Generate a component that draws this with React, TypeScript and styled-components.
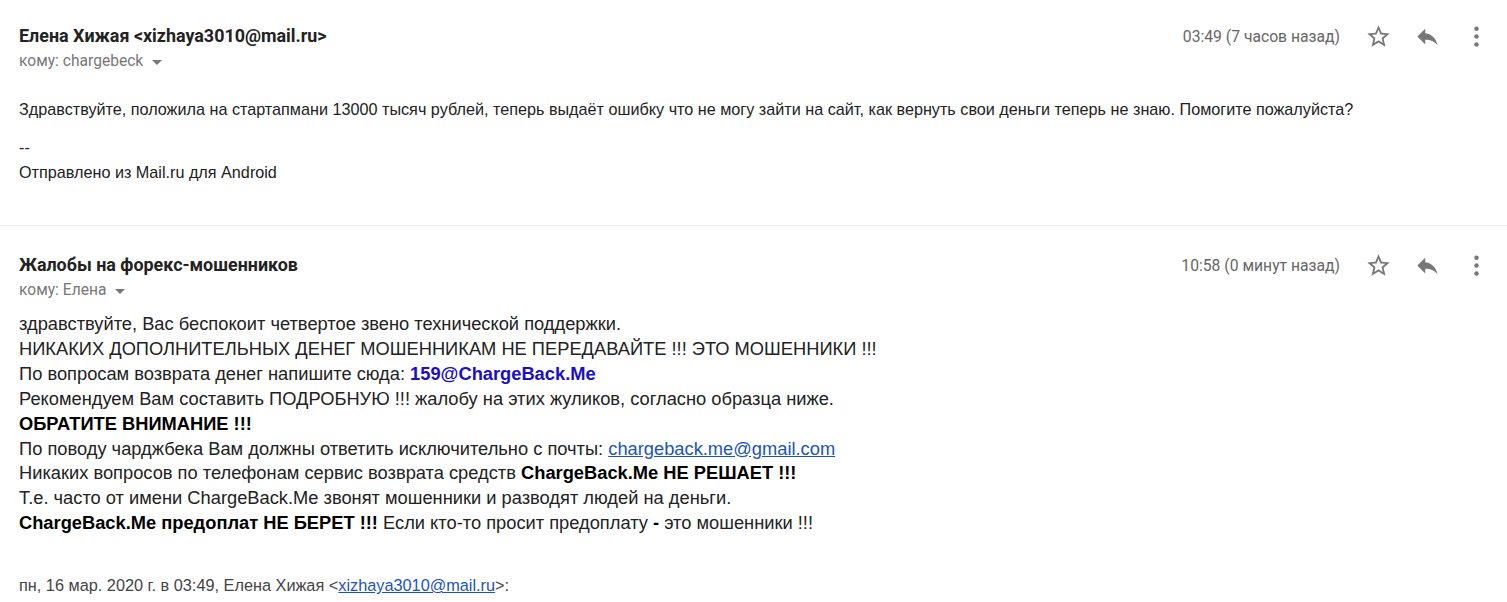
import styled, { createGlobalStyle } from "styled-components";

const GlobalStyle = createGlobalStyle`
  body {
    margin: 0;
    background: #fff;
    font-family: Roboto, "Liberation Sans", Arial, sans-serif;
  }
`;

function StarIcon() {
  return (
    <svg width="27" height="27" viewBox="0 0 24 24">
      <path
        fill="#777"
        d="M22 9.24l-7.19-.62L12 2 9.19 8.63 2 9.24l5.46 4.73L5.82 21 12 17.27 18.18 21l-1.63-7.03L22 9.24zM12 15.4l-3.76 2.27 1-4.28-3.32-2.88 4.38-.38L12 6.1l1.71 4.04 4.38.38-3.32 2.88 1 4.28L12 15.4z"
      />
    </svg>
  );
}

function ReplyIcon() {
  return (
    <svg width="27" height="27" viewBox="0 0 24 24">
      <path fill="#777" d="M10 9V5l-7 7 7 7v-4.1c5 0 8.5 1.6 11 5.1-1-5-4-10-11-11z" />
    </svg>
  );
}

function MoreIcon() {
  return (
    <svg width="27" height="27" viewBox="0 0 24 24">
      <circle cx="12" cy="5" r="2" fill="#777" />
      <circle cx="12" cy="12" r="2" fill="#777" />
      <circle cx="12" cy="19" r="2" fill="#777" />
    </svg>
  );
}

interface HeaderProps {
  from: string;
  to: string;
  time: string;
}

function MessageHeader({ from, to, time }: HeaderProps) {
  return (
    <Header>
      <Sender>
        <From>{from}</From>
        <To>
          кому: {to}
          <Caret />
        </To>
      </Sender>
      <Meta>
        <Time>{time}</Time>
        <IconButton>
          <StarIcon />
        </IconButton>
        <IconButton>
          <ReplyIcon />
        </IconButton>
        <IconButton>
          <MoreIcon />
        </IconButton>
      </Meta>
    </Header>
  );
}

function App() {
  return (
    <>
      <GlobalStyle />
      <Page>
        <Message $top={22} $divider>
          <MessageHeader
            from="Елена Хижая <xizhaya3010@mail.ru>"
            to="chargebeck"
            time="03:49 (7 часов назад)"
          />
          <FirstBody>
            <Para>
              Здравствуйте, положила на стартапмани 13000 тысяч рублей, теперь
              выдаёт ошибку что не могу зайти на сайт, как вернуть свои деньги
              теперь не знаю. Помогите пожалуйста?
            </Para>
            <Line $size={16.2}>--</Line>
            <Line $size={16.2}>Отправлено из Mail.ru для Android</Line>
          </FirstBody>
        </Message>
        <Message $top={25}>
          <MessageHeader
            from="Жалобы на форекс-мошенников"
            to="Елена"
            time="10:58 (0 минут назад)"
          />
          <Body>
            <Line>здравствуйте, Вас беспокоит четвертое звено технической поддержки.</Line>
            <Line>НИКАКИХ ДОПОЛНИТЕЛЬНЫХ ДЕНЕГ МОШЕННИКАМ НЕ ПЕРЕДАВАЙТЕ !!! ЭТО МОШЕННИКИ !!!</Line>
            <Line>
              По вопросам возврата денег напишите сюда: <BlueBold>159@ChargeBack.Me</BlueBold>
            </Line>
            <Line>
              Рекомендуем Вам составить ПОДРОБНУЮ !!! жалобу на этих жуликов, согласно образца ниже.
            </Line>
            <Line>
              <b>ОБРАТИТЕ ВНИМАНИЕ !!!</b>
            </Line>
            <Line>
              По поводу чарджбека Вам должны ответить исключительно с почты:{" "}
              <MailLink>chargeback.me@gmail.com</MailLink>
            </Line>
            <Line>
              Никаких вопросов по телефонам сервис возврата средств{" "}
              <b>ChargeBack.Me НЕ РЕШАЕТ !!!</b>
            </Line>
            <Line>Т.е. часто от имени ChargeBack.Me звонят мошенники и разводят людей на деньги.</Line>
            <Line>
              <b>ChargeBack.Me предоплат НЕ БЕРЕТ !!!</b> Если кто-то просит предоплату <b>-</b> это
              мошенники !!!
            </Line>
          </Body>
          <Quote>
            пн, 16 мар. 2020 г. в 03:49, Елена Хижая &lt;
            <MailLink>xizhaya3010@mail.ru</MailLink>&gt;:
          </Quote>
        </Message>
      </Page>
    </>
  );
}

const Page = styled.div`
  width: 1507px;
  height: 602px;
  overflow: hidden;
  background: #fff;
`;

const Message = styled.div<{ $top: number; $divider?: boolean }>`
  padding: ${(p) => p.$top}px 6px 0 19px;
  border-bottom: ${(p) => (p.$divider ? "1px solid #efefef" : "none")};
  height: ${(p) => (p.$divider ? "226px" : "auto")};
  box-sizing: border-box;
`;

const Header = styled.div`
  display: flex;
  justify-content: space-between;
  align-items: flex-start;
`;

const Sender = styled.div`
  display: flex;
  flex-direction: column;
`;

const From = styled.div`
  font-family: Roboto, "Liberation Sans", sans-serif;
  font-weight: 700;
  font-size: 17.9px;
  line-height: 28px;
  color: #222;
`;

const To = styled.div`
  display: flex;
  align-items: center;
  font-family: Roboto, "Liberation Sans", sans-serif;
  font-size: 15.6px;
  line-height: 22px;
  color: #777;
`;

const Caret = styled.span`
  display: inline-block;
  margin-left: 9px;
  margin-top: 2px;
  border-left: 5px solid transparent;
  border-right: 5px solid transparent;
  border-top: 5px solid #777;
`;

const Meta = styled.div`
  display: flex;
  align-items: center;
  height: 28px;
`;

const Time = styled.div`
  font-family: Roboto, "Liberation Sans", sans-serif;
  font-size: 15.7px;
  color: #666;
  margin-right: 14px;
`;

const IconButton = styled.div`
  width: 49px;
  height: 28px;
  display: flex;
  align-items: center;
  justify-content: center;
`;

const FirstBody = styled.div`
  margin-top: 25px;
`;

const Line = styled.div<{ $size?: number }>`
  font-family: "Liberation Sans", Arial, sans-serif;
  font-size: ${(p) => p.$size ?? 18.3}px;
  line-height: 24.9px;
  color: #222;
  white-space: nowrap;

  & b {
    font-weight: 700;
    color: #000;
  }
`;

const Para = styled(Line).attrs({ $size: 16.2 })`
  margin-bottom: 13px;
`;

const Body = styled.div`
  margin-top: 11px;
`;

const BlueBold = styled.b`
  color: #1a0dcc !important;
`;

const MailLink = styled.a`
  color: #1a55b8;
  text-decoration: underline;
`;

const Quote = styled.div`
  margin-top: 40px;
  font-family: "Liberation Sans", Arial, sans-serif;
  font-size: 16.3px;
  line-height: 18px;
  color: #444;
`;

export default App;
